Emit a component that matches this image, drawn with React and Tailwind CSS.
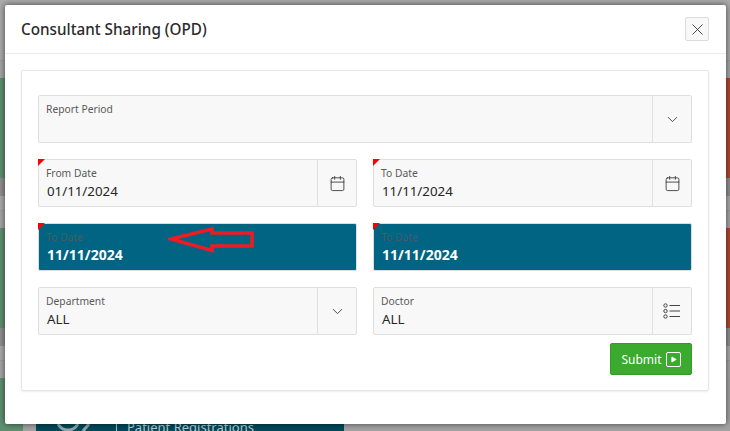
import { X, ChevronDown, Calendar, Play } from "lucide-react";

const ListIcon = () => (
  <svg width="18" height="16" viewBox="0 0 18 16" fill="none" stroke="#444" strokeWidth="1">
    <circle cx="2.5" cy="2.5" r="1.7" />
    <circle cx="2.5" cy="8" r="1.7" />
    <circle cx="2.5" cy="13.5" r="1.7" />
    <path d="M6.5 2.5H17M6.5 8H17M6.5 13.5H17" />
  </svg>
);

const Field = ({ label, value, icon, required, highlight }) => (
  <div
    className={`relative flex h-12 flex-1 rounded-[2px] border ${
      highlight ? "border-[#dcdcdc] bg-[#006482]" : "border-[#dfdfdf] bg-[#f8f8f8]"
    }`}
  >
    {required && (
      <span className="absolute -top-px -left-px h-0 w-0 border-t-[7px] border-r-[7px] border-t-[#ff0000] border-r-transparent" />
    )}
    <div className="flex min-w-0 flex-1 flex-col pt-[6px] pl-[7px]">
      <span className={`text-[10.3px] leading-[15px] ${highlight ? "text-[#4d5a60]" : "text-[#5a5a5a]"}`}>
        {label}
      </span>
      <span
        className={`pt-[1px] pl-px leading-[18px] ${
          highlight ? "text-[14px] font-bold text-white" : "text-[13.3px] text-[#262626]"
        }`}
      >
        {value}
      </span>
    </div>
    {icon && (
      <div className="flex w-[39px] items-center justify-center border-l border-[#dfdfdf] text-[#333333]">
        {icon}
      </div>
    )}
  </div>
);

const BackgroundRow = ({ className, left, right, children }) => (
  <div className={`flex justify-between ${className}`}>
    <div className={`w-[23px] ${left}`} />
    {children}
    <div className={`w-[20px] ${right}`} />
  </div>
);

export default function App() {
  return (
    <div className="relative h-[431px] w-[730px] overflow-hidden bg-[#a9a9a9] font-['Noto_Sans','Open_Sans',sans-serif]">
      {/* page behind the overlay */}
      <div className="h-[61px] border-b border-[#9d9d9d] bg-[#aaaaaa]" />
      <div className="h-[17px] bg-[#a5a5a5]" />
      <BackgroundRow className="h-[100px]" left="bg-[#5f9070]" right="bg-[#ad4a30]" />
      <div className="h-[18px] bg-[#8f8f8f]" />
      <div className="h-[15px] border-b border-[#9d9d9d] bg-[#ababab]" />
      <div className="h-[17px] bg-[#a5a5a5]" />
      <BackgroundRow className="h-[100px]" left="bg-[#5f9070]" right="bg-[#ad4a30]" />
      <div className="h-[18px] bg-[#8f8f8f]" />
      <div className="h-[15px] border-b border-[#9d9d9d] bg-[#ababab]" />
      <div className="h-[17px] bg-[#a5a5a5]" />
      <div className="flex h-[53px] bg-[#a3a3a3]">
        <div className="w-[23px] bg-[#5f9070]" />
        <div className="ml-[13px] flex h-full w-[308px] items-end overflow-hidden bg-[#004a5a]">
          <svg className="ml-[21px] shrink-0" width="38" height="7" viewBox="0 0 38 7" fill="none" stroke="#8fa9ae" strokeWidth="3">
            <path d="M1 0C4 5 8 6 11 6S18 5 21 0M26 7L32 0" />
          </svg>
          <span className="ml-[21px] h-[7px] w-px shrink-0 bg-[#a9c2c7]" />
          <span className="mb-[-3px] ml-[10px] text-[13px] leading-[14px] whitespace-nowrap text-[#b9cfd3]">
            Patient Registrations
          </span>
        </div>
      </div>

      {/* dialog */}
      <div className="absolute top-[5px] left-[5px] flex h-[419px] w-[721px] flex-col rounded-[2px] bg-white shadow-[0_0_6px_rgba(0,0,0,0.6)]">
        <div className="flex h-[49px] shrink-0 items-center justify-between border-b border-[#ececec] pr-[17px] pl-[16px]">
          <h1 className="pt-px text-[15.25px] font-medium text-[#2b2b2b]">Consultant Sharing (OPD)</h1>
          <button className="flex h-6 w-6 items-center justify-center rounded-[2px] border border-[#dcdcdc] bg-[#f8f8f8] text-[#333333]">
            <X size={19} strokeWidth={1.1} />
          </button>
        </div>
        <div className="mt-[16px] mr-[17px] ml-[16px] flex h-[321px] flex-col gap-4 rounded-[2px] border border-[#e6e6e6] px-[16px] pt-[24px] shadow-[0_1px_2px_rgba(0,0,0,0.08)]">
          <div className="flex">
            <Field label="Report Period" icon={<ChevronDown size={17} strokeWidth={1.2} />} />
          </div>
          <div className="flex gap-4">
            <Field label="From Date" value="01/11/2024" required icon={<Calendar size={17} strokeWidth={1.2} />} />
            <Field label="To Date" value="11/11/2024" required icon={<Calendar size={17} strokeWidth={1.2} />} />
          </div>
          <div className="flex gap-4">
            <Field label="To Date" value="11/11/2024" required highlight />
            <Field label="To Date" value="11/11/2024" required highlight />
          </div>
          <div className="flex gap-4">
            <Field label="Department" value="ALL" icon={<ChevronDown size={17} strokeWidth={1.2} />} />
            <Field label="Doctor" value="ALL" icon={<ListIcon />} />
          </div>
          <div className="-mt-2 flex justify-end">
            <button className="flex h-8 w-[82px] items-center justify-center gap-[4px] rounded-[2px] border border-[#359a29] bg-[#3caa2e] pt-px text-[12px] text-white">
              Submit
              <span className="flex h-[15px] w-[15px] items-center justify-center rounded-[2px] border-[1.5px] border-white">
                <Play size={7} fill="white" strokeWidth={1} />
              </span>
            </button>
          </div>
        </div>
      </div>

      {/* red annotation arrow */}
      <svg className="absolute top-[226px] left-[168px]" width="88" height="28" viewBox="0 0 88 28" fill="none">
        <path d="M3 13L44 3V7H84V20H44V24.5Z" stroke="#ed1c24" strokeWidth="3.5" />
      </svg>
    </div>
  );
}
